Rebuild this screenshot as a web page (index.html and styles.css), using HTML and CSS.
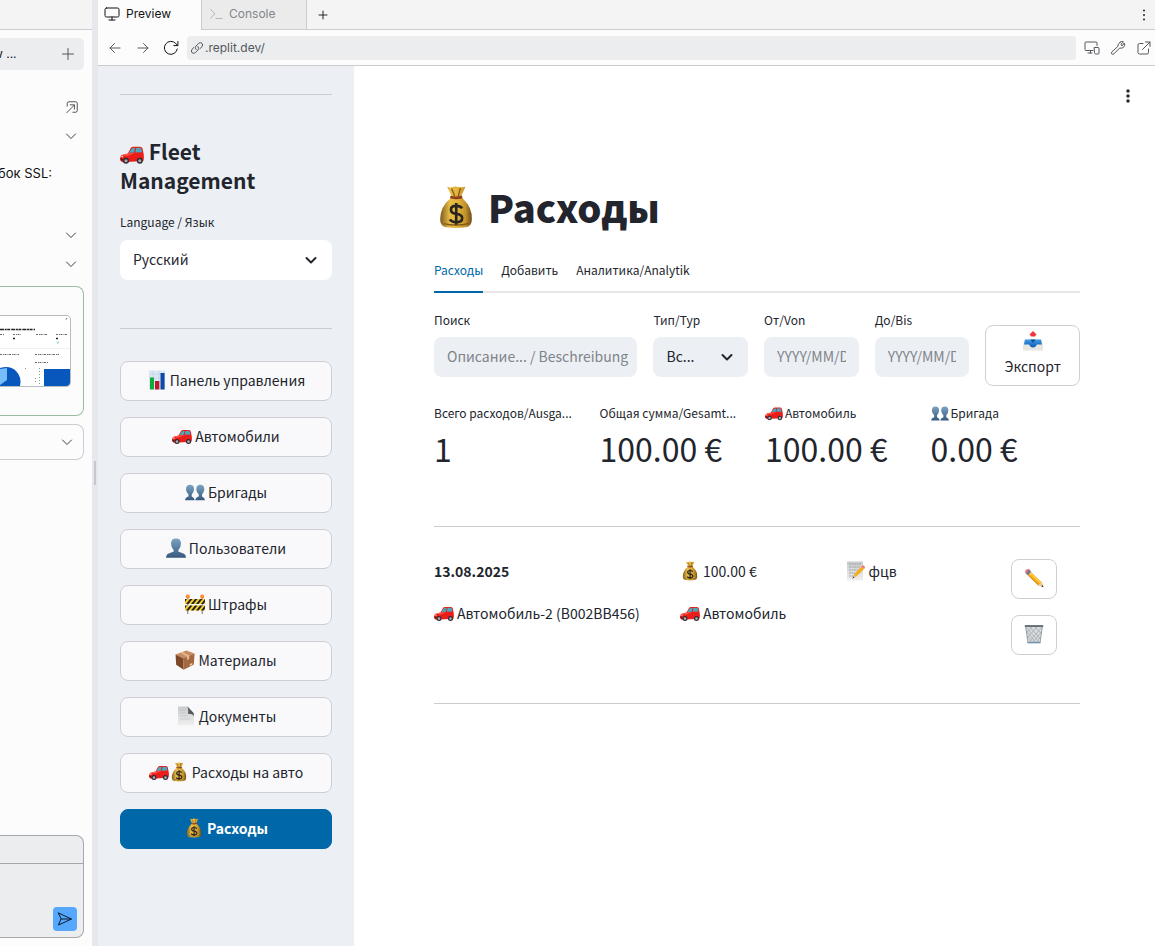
FILE: index.html
```html
<!DOCTYPE html>
<html lang="ru">
<head>
<meta charset="utf-8">
<title>Fleet Management</title>
<link rel="stylesheet" href="styles.css">
</head>
<body>
<svg class="sprite" aria-hidden="true">
  <defs>
    <linearGradient id="gold" x1="0" x2="1" y1="0" y2="0"><stop offset="0" stop-color="#7d5a1c"/><stop offset=".3" stop-color="#e8bc47"/><stop offset=".55" stop-color="#e3b43c"/><stop offset=".8" stop-color="#c2922c"/><stop offset="1" stop-color="#6c4a14"/></linearGradient>
    <linearGradient id="blue" x1="0" x2="0" y1="0" y2="1"><stop offset="0" stop-color="#7ba3c4"/><stop offset="1" stop-color="#36597c"/></linearGradient>
    <linearGradient id="page" x1="0" x2="0" y1="0" y2="1"><stop offset="0" stop-color="#c9cbcd"/><stop offset="1" stop-color="#efefef"/></linearGradient>
    <linearGradient id="tray" x1="0" x2="0" y1="0" y2="1"><stop offset="0" stop-color="#3f9be8"/><stop offset="1" stop-color="#0a5bb0"/></linearGradient>
  </defs>
  <symbol id="car" viewBox="0 0 20 20">
    <path d="M0 13.500 1 11 6.500 9.500 9 5Q9.600 4.100 11 4L16.800 3.900Q18.200 3.900 18.700 5.300L19.500 9Q20.300 12.500 19.500 15.800L2 16.800Q0 16 0 13.500Z" fill="#ea1d1a"/>
    <path d="M1 11 6.500 9.500 12.500 9.300 6 11.500Z" fill="#ff5c4d"/>
    <path d="M7.400 9 9.700 5.600Q10.100 5 11 5L12.600 4.900 11.700 8.800ZM13.500 4.900 16.500 4.800Q17.400 4.800 17.800 6L18.400 8.500 12.700 8.700Z" fill="#49a9be"/>
    <path d="M.2 13.500 2.200 14V15.600L.6 15.300Z" fill="#571313"/>
    <path d="M1.200 12 2.600 12.200" stroke="#fff0c0"/>
    <circle cx="5" cy="15.600" r="2.500" fill="#2c2c30"/><circle cx="5" cy="15.600" r="1.300" fill="#a9adb1"/>
    <circle cx="16.500" cy="15.600" r="2.500" fill="#2c2c30"/><circle cx="16.500" cy="15.600" r="1.300" fill="#a9adb1"/>
  </symbol>
  <symbol id="bag" viewBox="0 0 20 20">
    <path d="M6 .8Q8 1.5 9.7.6 11.6 1.4 14.3.8L12.3 5.2 13.4 6.5Q17.4 10.3 17.2 15.6 17.2 18.6 15 19.1 10 20 5 19.1 2.8 18.6 2.8 15.6 2.8 10 7.3 6.3L8 5.2Z" fill="url(#gold)"/>
    <path d="M8 1.6 9.4 5M12 1.4 11 5M4.4 17.6Q10 19 16 17.5" fill="none" stroke="#80591b" stroke-width=".6"/>
    <path d="M7.4 5.5Q10 6.2 12.8 5.4" fill="none" stroke="#8a3e19" stroke-width="1.2"/>
    <path d="M12.8 10.6Q12 9.5 10.1 9.5 7.7 9.5 7.7 11.2 7.7 12.8 10.2 13.1 12.8 13.5 12.8 15.1 12.8 16.9 10.1 16.9 8 16.9 7.2 15.6M10.1 8.2V18.1" fill="none" stroke="#29251f" stroke-width="1.2"/>
  </symbol>
  <symbol id="chart" viewBox="0 0 20 20">
    <path d="M2 .5H18V19.5H2Z" fill="#dce8f1"/><path d="M2 4H18M2 8H18M2 12H18M2 16H18M6 .5V19M12 .5V19" stroke="#bccbd8" stroke-width=".5"/>
    <path d="M3 7.5H7V19.5H3Z" fill="#0eac3a"/><path d="M8 11H12.3V19.5H8Z" fill="#bd1b2c"/><path d="M13.5 3H17.6V19.5H13.5Z" fill="#1248a8"/>
  </symbol>
  <symbol id="people" viewBox="0 0 20 20">
    <path id="bust" d="M0 18.3Q.2 15.6 3.5 14.6V12.6Q1.2 10.5 1 7.500.9 2.900 5 2.800 9.200 2.900 9 7.500 8.800 10.500 6.700 12.600V14.600Q9.500 15.600 9.700 18.300Z" fill="url(#blue)"/>
    <use href="#bust" x="10.3"/>
  </symbol>
  <symbol id="person" viewBox="0 0 20 20"><path d="M0 19.7Q.3 16 3.3 15.2L7.7 13.5V12.2Q5.2 9.8 5 5.8 5 .6 10 .5 15 .6 15 5.8 14.8 9.8 12.3 12.2V13.5L16.7 15.2Q19.7 16 20 19.7Z" fill="url(#blue)"/></symbol>
  <symbol id="barrier" viewBox="0 0 20 20">
    <path d="M2.7 3V20M17.3 3V20" stroke="#9b9b9b" stroke-width="1.4"/>
    <circle cx="2.8" cy="2.5" r="2" fill="#ff7a22"/><circle cx="17.2" cy="2.5" r="2" fill="#ff7a22"/><circle cx="2.8" cy="2.2" r=".8" fill="#ffc24a"/><circle cx="17.2" cy="2.2" r=".8" fill="#ffc24a"/>
    <path d="M0 5H20V10H0ZM0 11.5H20V16.5H0Z" fill="#f5cf30"/>
    <path d="M0 8V5H2ZM1 10 5 5H7.5L3.5 10ZM6 10 10 5H12.5L8.5 10ZM11 10 15 5H17.5L13.5 10ZM16 10 20 5V8L18.5 10ZM0 14.5V11.5H2ZM1 16.5 5 11.5H7.5L3.5 16.5ZM6 16.5 10 11.5H12.5L8.5 16.5ZM11 16.5 15 11.5H17.5L13.5 16.5ZM16 16.5 20 11.5V14.5L18.5 16.5Z" fill="#222"/>
  </symbol>
  <symbol id="box" viewBox="0 0 20 20">
    <path d="M.5 4.5 11.5.5 19.5 3.5 8 8.2Z" fill="#c88b5e"/><path d="M.5 4.5 8 8.2 8.7 19.7 1.2 14.8Z" fill="#7b4728"/><path d="M8 8.2 19.5 3.5 18.9 14.5 8.7 19.7Z" fill="#a5683f"/>
    <path d="M5 2.8 7.4 2 14.3 5.5 14.2 9 12 10 11.9 6.6Z" fill="#e2b78f"/><path d="M14.8 14.1 17.4 12.9V14.6L14.8 15.9Z" fill="#ead0b8"/>
  </symbol>
  <symbol id="doc" viewBox="0 0 20 20"><path d="M2 .5H11.5L18 10V19.5H2Z" fill="url(#page)"/><path d="M11.500.5Q12.8 3.8 12 7.8 16 7.2 18 10L17.7 7Z" fill="#55595e"/><path d="M4 4H10M4 7H10M4 10H12M4 13H14" stroke="#b9bbbd" stroke-width=".5"/></symbol>
  <symbol id="pencil" viewBox="0 0 20 20">
    <path d="M1 3Q2.5.4 5 1L7 3 3.4 6.9 1.2 5Z" fill="#ee7588"/><path d="M4.7 2.1 7.4 4.1 4.1 7.6 2.1 5.6Z" fill="#607a91"/>
    <path d="M7 4 18 14.4 14.2 17.4 3.8 7.3Z" fill="#f5ad1c"/><path d="M6 5 16.8 15" stroke="#ffd35c" stroke-width="1.2"/><path d="M4.5 7.5 14.6 17" stroke="#cd7d0c" stroke-width=".8"/>
    <path d="M18 14.4 19.5 19.3 14.2 17.4Z" fill="#e9c795"/><path d="M18.8 17.1 19.5 19.3 17.3 18.5Z" fill="#333"/>
  </symbol>
  <symbol id="memo" viewBox="0 0 20 20"><path d="M1 .5H17V19.5H1Z" fill="url(#page)"/><path d="M3 3H15M3 6H14M3 9H12M3 12H9M3 15H7" stroke="#92969a" stroke-width=".8" stroke-dasharray="2 .5"/><path d="M15.3 5.4 18.2 8 10.2 15.5 7 17 8 13.5Z" fill="#f5ad1c"/><path d="M16.3 4.4Q18.4 4 19 6.5L18.2 8 15.3 5.4Z" fill="#ee7588"/><path d="M7 17 8 13.5 10.2 15.5Z" fill="#e3b888"/><path d="M6.2 17.8 7.4 15.6 8.4 16.5Z" fill="#333"/></symbol>
  <symbol id="trash" viewBox="0 0 20 20"><path d="M1.3 2H18.7L16.2 19H3.8Z" fill="#d7dadd"/><path d="M2 3 15.5 18.5M5 2 16.5 15M10 2 17.3 9.5M2.5 7 12 19M3 12 9 19M18 3 4.5 18.5M14 2 3.2 14M9 2 2.3 9M17.3 8 8 19M16.5 13 11.5 19" stroke="#8c959d" stroke-width=".5"/><path d="M.8 2H19.2" stroke="#4a5765" stroke-width="1.6"/><path d="M3.6 18.6H16.4" stroke="#7593b1" stroke-width="1.5"/><path d="M1.7 3 4 19M18.3 3 16 19" stroke="#7e8891" stroke-width=".7"/></symbol>
  <symbol id="outbox" viewBox="0 0 20 20"><path d="M1.5 8.5H18.5L20 14V19.5H0V14Z" fill="#e6e6e3"/><path d="M2 8.5H18L19 13.5H14Q12.8 16.4 10 16.5 7.2 16.4 6 13.5H1Z" fill="url(#tray)"/><path d="M7.5 8.5H12.5L10 12Z" fill="#124f92"/><path d="M10 0 13.5 3.5 11.8 5.5H8.2L6.5 3.5Z" fill="#ef3742"/></symbol>
  <symbol id="chevron" viewBox="0 0 16 16"><path d="m3.500 6 4.500 4.500L12.500 6" fill="none" stroke="currentColor" stroke-linecap="round" stroke-linejoin="round"/></symbol>
</svg>

<aside class="chat">
  <div class="chat-top"></div>
  <div class="chat-tab"><span>w ...</span><button class="plain" aria-label="New chat"><svg class="i16" viewBox="0 0 16 16"><path d="M8 2.500V13.500M2.500 8H13.500"/></svg></button></div>
  <div class="chat-rows">
    <button class="plain" aria-label="Open"><svg class="i14" viewBox="0 0 16 16"><path d="M2.500 7V4Q2.500 2 4.500 2H12Q14 2 14 4V12Q14 14 12 14H9M2 14.500 10.500 6M6 5.500H10.800V10.300"/></svg></button>
    <button class="plain" aria-label="Expand"><svg class="i16"><use href="#chevron"/></svg></button>
    <p>бок SSL:</p>
    <button class="plain low" aria-label="Expand"><svg class="i16"><use href="#chevron"/></svg></button>
    <button class="plain" aria-label="Expand"><svg class="i16"><use href="#chevron"/></svg></button>
  </div>
  <div class="shot-card">
    <svg class="shot" viewBox="0 0 71 72" role="img" aria-label="Dashboard">
      <path d="M0 .5H66Q70.500.500 70.500 5V67Q70.500 71.500 66 71.500H0" fill="#fff" stroke="#b9bcbf"/>
      <path d="M0 14.500H35" stroke="#222" stroke-width="1.600" stroke-dasharray="4 .7 2 .5 3 1"/>
      <path d="M0 19.500H4M13 19.500H21M36 19.500H47M56 19.500H68M0 39.500H19M35 39.500H59M35 47.500H48" stroke="#444" stroke-width=".8" stroke-dasharray="2 1 1 .5"/>
      <path d="M13 23.500H15M56 23.500H58" stroke="#222" stroke-width="1.500"/><circle cx="58" cy="27.500" r="1.200" fill="#a9e5bd"/><path d="M0 33.500H70" stroke="#f0f0f0"/>
      <path d="M66 4.500 67 3" stroke="#555"/>
      <path d="M0 53Q10 50 16 56 22 62 20 71H0Z" fill="#0857bd"/><path d="M0 54 7 53V65L0 70Z" fill="#76bdfb"/>
      <path d="M25.500 53V56M39.500 53V71M35.500 63V68" stroke="#777" stroke-width=".8" stroke-dasharray="1 2"/>
      <path d="M44 54H70V67Q70 71 66 71H44Z" fill="#0857bd"/>
    </svg>
  </div>
  <div class="more-card"><button class="plain" aria-label="Expand"><svg class="i16"><use href="#chevron"/></svg></button></div>
  <div class="composer">
    <div class="composer-head"></div>
    <div class="composer-body"><button class="send" aria-label="Send"><svg class="i16" viewBox="0 0 16 16"><path d="M1.500 2 14.500 8 1.500 14 4 8ZM4 8H14"/></svg></button></div>
  </div>
</aside>
<div class="splitter"><i></i></div>

<div class="workspace">
  <nav class="tabs">
    <button class="tab tab-on"><svg class="i16" viewBox="0 0 16 16"><path d="M2.500 2H13.500Q15 2 15 3.500V9.500Q15 11 13.500 11H2.500Q1 11 1 9.500V3.500Q1 2 2.500 2ZM8 11V14M5 14H11"/></svg>Preview</button>
    <button class="tab tab-off"><svg class="i14" viewBox="0 0 14 14"><path d="M1.500 2.500 6 6.800 1.500 11M7 11.500H13"/></svg>Console</button>
    <button class="plain add" aria-label="New tab"><svg class="i14" viewBox="0 0 14 14"><path d="M7 3V11M3 7H11"/></svg></button>
    <button class="plain dots" aria-label="Menu"><svg class="i16" viewBox="0 0 16 16"><circle cx="8" cy="3.500" r="1"/><circle cx="8" cy="8" r="1"/><circle cx="8" cy="12.500" r="1"/></svg></button>
  </nav>
  <div class="toolbar">
    <button class="plain" aria-label="Back"><svg class="i16" viewBox="0 0 16 16"><path d="M13 8H3M7.500 3.500 3 8 7.500 12.500"/></svg></button>
    <button class="plain" aria-label="Forward"><svg class="i16" viewBox="0 0 16 16"><path d="M3 8H13M8.500 3.500 13 8 8.500 12.500"/></svg></button>
    <button class="plain reload" aria-label="Reload"><svg class="i16" viewBox="0 0 16 16"><path d="M14.300 9A6.500 6.500 0 1 1 12.800 3.600L14.800 5.500M14.900 1.500V5.600H10.800"/></svg></button>
    <div class="address"><svg class="i14" viewBox="0 0 14 14"><path d="M6 8.500Q4.400 6.600 6.100 4.900L8.700 2.300Q10.400 1 12 2.300 13.300 4 12 5.700L10 7.600M8 5.500Q9.600 7.400 7.900 9.100L5.300 11.700Q3.600 13 2 11.700.700 10 2 8.300L4 6.400"/></svg><input aria-label="Address" value=".replit.dev/"></div>
    <div class="tools">
      <button class="plain" aria-label="Devices"><svg class="i16" viewBox="0 0 16 16"><path d="M9 10.500H2Q1 10.500 1 9.500V3Q1 2 2 2H12Q13 2 13 3V5.500M4 13H8M6.500 10.500V13M10.500 7.500H14Q15 7.500 15 8.500V13Q15 14 14 14H11.500Q10.500 14 10.500 13Z"/></svg></button>
      <button class="plain" aria-label="Tools"><svg class="i16" viewBox="0 0 16 16"><path d="M10 2.300Q11.800 1 13.500 1.800L11 4.200 11.800 6 14.300 3Q15.500 5.200 13.700 7.200 12 8.700 9.700 8L4 13.800Q2.800 14.800 1.700 13.900.900 12.900 2 11.800L7.900 6.400Q7.400 4 10 2.300Z"/></svg></button>
      <button class="plain" aria-label="Open in new tab"><svg class="i16" viewBox="0 0 16 16"><path d="M7 3.500H3.500Q2 3.500 2 5V12.500Q2 14 3.500 14H11Q12.500 14 12.500 12.500V9M6.500 9.500 14 2M9.500 2H14V6.500"/></svg></button>
    </div>
  </div>

  <div class="app">
    <aside class="sidebar">
      <hr>
      <h2><svg class="emoji-title"><use href="#car"/></svg> Fleet Management</h2>
      <label for="lang">Language / Язык</label>
      <div class="select"><select id="lang"><option>Русский</option><option>Deutsch</option></select><svg class="i16"><use href="#chevron"/></svg></div>
      <hr class="hr-menu">
      <div class="menu">
        <button class="btn"><svg class="emoji"><use href="#chart"/></svg>Панель управления</button>
        <button class="btn"><svg class="emoji"><use href="#car"/></svg>Автомобили</button>
        <button class="btn"><svg class="emoji"><use href="#people"/></svg>Бригады</button>
        <button class="btn"><svg class="emoji"><use href="#person"/></svg>Пользователи</button>
        <button class="btn"><svg class="emoji"><use href="#barrier"/></svg>Штрафы</button>
        <button class="btn"><svg class="emoji"><use href="#box"/></svg>Материалы</button>
        <button class="btn"><svg class="emoji"><use href="#doc"/></svg>Документы</button>
        <button class="btn"><span class="pair"><svg class="emoji"><use href="#car"/></svg><svg class="emoji"><use href="#bag"/></svg></span>Расходы на авто</button>
        <button class="btn btn-primary"><svg class="emoji"><use href="#bag"/></svg>Расходы</button>
      </div>
    </aside>

    <main class="main">
      <button class="plain app-menu" aria-label="App menu"><svg class="i16" viewBox="0 0 16 16"><circle cx="8" cy="3" r="1.700"/><circle cx="8" cy="8" r="1.700"/><circle cx="8" cy="13" r="1.700"/></svg></button>
      <h1><svg class="emoji-h1"><use href="#bag"/></svg>Расходы</h1>
      <div class="page-tabs"><button class="on">Расходы</button><button>Добавить</button><button>Аналитика/Analytik</button></div>
      <form class="filters">
        <div><label for="q">Поиск</label><input class="field search" id="q" placeholder="Описание... / Beschreibung..."></div>
        <div><label for="type">Тип/Typ</label><div class="select grey"><select id="type"><option>Вс...</option></select><svg class="i16"><use href="#chevron"/></svg></div></div>
        <div><label for="from">От/Von</label><input class="field" id="from" placeholder="YYYY/MM/DD"></div>
        <div><label for="to">До/Bis</label><input class="field" id="to" placeholder="YYYY/MM/DD"></div>
        <button type="button" class="btn export"><svg class="emoji"><use href="#outbox"/></svg>Экспорт</button>
      </form>
      <div class="metrics">
        <div><p>Всего расходов/Ausga...</p><strong>1</strong></div>
        <div><p>Общая сумма/Gesamt...</p><strong>100.00 €</strong></div>
        <div><p class="with-icon"><svg class="emoji-small"><use href="#car"/></svg>Автомобиль</p><strong>100.00 €</strong></div>
        <div><p class="with-icon"><svg class="emoji-small"><use href="#people"/></svg>Бригада</p><strong>0.00 €</strong></div>
      </div>
      <hr>
      <div class="expense">
        <div class="cell"><p><b>13.08.2025</b></p><p><svg class="emoji"><use href="#car"/></svg>Автомобиль-2 (B002BB456)</p></div>
        <div class="cell"><p><svg class="emoji"><use href="#bag"/></svg>100.00 €</p><p><svg class="emoji"><use href="#car"/></svg>Автомобиль</p></div>
        <div class="cell"><p><svg class="emoji"><use href="#memo"/></svg>фцв</p></div>
        <div class="actions"><button class="btn" aria-label="Изменить"><svg class="emoji"><use href="#pencil"/></svg></button><button class="btn" aria-label="Удалить"><svg class="emoji"><use href="#trash"/></svg></button></div>
      </div>
      <hr>
    </main>
  </div>
</div>
</body>
</html>
```

FILE: styles.css
```css
* { box-sizing: border-box; }
body { margin: 0; min-height: 100vh; display: flex; background: #fff; color: #22252d; font: 14px/24px "Noto Sans CJK KR", "Noto Sans", sans-serif; overflow-x: hidden; }
h1, h2, p { margin: 0; }
button, input, select { font: inherit; color: inherit; margin: 0; }
button { cursor: pointer; }
svg { display: block; flex: none; }
hr { width: 100%; height: 1px; margin: 0; border: 0; background: #c9ccd1; flex: none; }
.sprite { position: absolute; width: 0; height: 0; }
.i16 { width: 16px; height: 16px; }
.i14 { width: 14px; height: 14px; }
.i16, .i14 { fill: none; stroke: currentColor; stroke-linecap: round; stroke-linejoin: round; }
.plain { display: flex; padding: 0; border: 0; background: none; }
.emoji { width: 20px; height: 20px; }
.emoji-small { width: 18px; height: 18px; }

/* Chat panel */
.chat { width: 92px; flex: none; display: flex; flex-direction: column; background: #fcfcfc; border-radius: 0 0 6px 0; color: #3b3e42; font-family: Inter, "Liberation Sans", sans-serif; overflow: hidden; }
.chat-top { height: 30px; background: #f4f4f4; border-bottom: 1px solid #cbcdcf; }
.chat-tab { display: flex; justify-content: space-between; align-items: center; height: 32px; margin: 8px 8px 0 -7px; padding: 0 8px 0 0; border-radius: 0 5px 5px 0; background: #ebedef; font-size: 12px; color: #111; }
.chat-tab .plain { color: #55595e; }
.chat-rows { display: grid; grid-template-rows: 29px 30px 44px 54px 30px; justify-items: end; align-items: center; align-content: start; padding: 22px 13px 0 0; height: 216px; }
.chat-rows p { justify-self: start; color: #111; white-space: nowrap; font-size: 13px; margin-left: -2px; }
.chat-rows .low { align-self: end; margin-bottom: 6px; }
.shot-card { height: 130px; margin-right: 8px; padding: 28px 12px 0 0; border: 1px solid #9bbba7; border-left: 0; border-radius: 0 8px 8px 0; }
.shot { width: 71px; height: 72px; }
.more-card { display: flex; align-items: center; justify-content: flex-end; height: 36px; margin: 8px 8px 0 0; padding-right: 8px; border: 1px solid #cbcdcf; border-left: 0; border-radius: 0 8px 8px 0; }
.composer { margin: auto 8px 8px 0; border: 1px solid #a5a8ab; border-left: 0; border-radius: 0 8px 8px 0; background: #ebedef; }
.composer-head { height: 28px; border-bottom: 1px solid #a5a8ab; }
.composer-body { display: flex; justify-content: flex-end; padding: 43px 6px 6px 0; }
.send { display: grid; place-items: center; width: 24px; height: 24px; padding: 0; border: 0; border-radius: 4px; background: #55a8fd; color: #0b1b2d; }
.splitter { width: 6px; flex: none; display: flex; align-items: center; justify-content: center; background: #e6e8eb; }
.splitter i { width: 2px; height: 24px; background: #c5c9cd; }

/* Browser frame */
.workspace { flex: 1; min-width: 0; display: flex; flex-direction: column; }
.tabs, .toolbar { font-family: Inter, "Liberation Sans", sans-serif; }
.tabs { display: flex; align-items: center; height: 30px; background: #f4f4f4; border-bottom: 1px solid #cbcdcf; line-height: 16px; }
.tab { display: flex; align-items: center; gap: 6px; height: 30px; margin-bottom: -1px; padding: 0 6px 2px; border: 0; font-size: 12px; }
.tab-on { width: 103px; background: #fcfcfc; color: #111; }
.tab-off { width: 106px; height: 29px; margin: 0; padding-left: 7px; background: #ebebeb; border: solid #cbcdcf; border-width: 0 1px; color: #84878b; }
.tab-off svg { color: #b5b8a9; }
.add { margin-left: 9px; }
.dots { margin-left: auto; margin-right: 3px; }
.dots svg, .app-menu svg { fill: currentColor; stroke: none; }
.toolbar { display: flex; align-items: center; gap: 12px; height: 36px; padding: 0 3px 0 9px; background: #fcfcfc; border-bottom: 1px solid #cbcdcf; color: #55585d; }
.reload { color: #111; }
.address { flex: 1; min-width: 0; display: flex; align-items: center; gap: 1px; height: 24px; margin: 0 -4px; padding: 0 3px; border-radius: 4px; background: #ebedef; }
.address input { flex: 1; min-width: 0; padding: 0; border: 0; background: none; font-size: 12px; outline: 0; }
.tools { display: flex; gap: 10px; }

/* Application */
.app { flex: 1; display: flex; }
.sidebar { width: 256px; flex: none; padding: 28px 22px; background: #ecf0f5; }
.sidebar h2 { margin-top: 42px; font-size: 21px; line-height: 29px; font-weight: 700; }
.emoji-title { display: inline-block; width: 24px; height: 24px; vertical-align: -6px; }
label { display: block; font-size: 12px; line-height: 20px; white-space: nowrap; }
.sidebar label { margin: 17px 0 8px; }
.select { position: relative; height: 40px; border-radius: 8px; background: #fff; }
.select select { width: 100%; height: 40px; padding: 0 36px 2px 13px; border: 0; border-radius: 8px; background: none; appearance: none; }
.select svg { position: absolute; right: 13px; top: 12px; stroke-width: 2; pointer-events: none; }
.grey { background: #ecf0f5; }
.hr-menu { margin-top: 48px; }
.menu { display: flex; flex-direction: column; gap: 16px; margin-top: 32px; }
.btn { display: flex; align-items: center; justify-content: center; gap: 3px; min-height: 40px; padding: 0 12px 2px; border: 1px solid #cdcfd4; border-radius: 8px; background: #f9f9fb; white-space: nowrap; }
.btn-primary { border-color: #0068a9; background: #0068a9; color: #fff; font-weight: 700; }
.pair { display: flex; }
.main { position: relative; flex: 1; min-width: 0; padding: 113px 75px 40px 80px; background: #fff; }
.app-menu { position: absolute; right: 19px; top: 22px; }
h1 { display: flex; align-items: center; gap: 10px; height: 60px; padding-bottom: 5px; font-size: 38px; line-height: 56px; font-weight: 900; }
.emoji-h1 { width: 44px; height: 44px; }
.page-tabs { display: flex; gap: 18px; margin-top: 12px; border-bottom: 2px solid #e7e7e9; font-size: 12px; }
.page-tabs button { height: 42px; margin-bottom: -2px; padding: 0 0 2px; border: 0; border-bottom: 2px solid transparent; background: none; white-space: nowrap; }
.page-tabs .on { color: #0068a9; border-color: #0068a9; }
.filters { display: grid; grid-template-columns: 215fr 100fr 100fr 100fr 100fr; gap: 16px; margin-top: 17px; align-items: start; }
.filters > div { min-width: 0; }
.filters label { margin-bottom: 7px; }
.field { display: block; width: 100%; height: 40px; padding: 0 13px 2px; border: 0; border-radius: 8px; background: #ecf0f5; }
.search { padding-right: 8px; }
.field::placeholder { color: #808389; opacity: 1; }
.export { flex-direction: column; gap: 3px; min-height: 61px; margin-top: 15px; background: #fff; }
.metrics { display: grid; grid-template-columns: repeat(4, minmax(0, 1fr)); gap: 16px; margin: 16px 0 53px; }
.metrics p { height: 22px; line-height: 22px; font-size: 12px; white-space: nowrap; }
.metrics strong { display: block; font-size: 32px; line-height: 49px; font-weight: 400; }
.metrics .with-icon { display: flex; align-items: center; gap: 2px; }
.expense { display: grid; grid-template-columns: 20fr 13fr 13fr 6fr; gap: 16px; margin: 32px 0 48px; }
.cell { min-width: 0; display: flex; flex-direction: column; gap: 18px; }
.cell p { display: flex; align-items: center; gap: 3px; white-space: nowrap; }
.actions { display: flex; flex-direction: column; align-items: flex-start; gap: 16px; }
.actions .btn { background: #fff; }
```
